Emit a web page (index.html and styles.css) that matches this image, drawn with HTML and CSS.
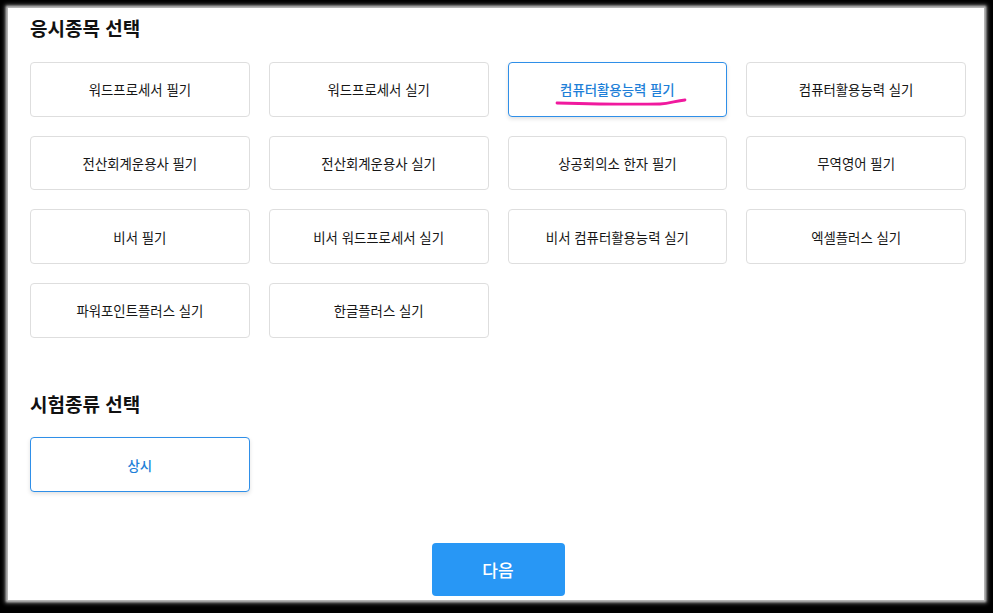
FILE: index.html
```html
<!DOCTYPE html>
<html lang="ko">
<head>
<meta charset="utf-8">
<title>응시종목 선택</title>
<link rel="stylesheet" href="styles.css">
</head>
<body>
<div class="frame">
  <main class="panel">
    <h2 class="section-title">응시종목 선택</h2>
    <div class="grid">
      <button class="opt">워드프로세서 필기</button>
      <button class="opt">워드프로세서 실기</button>
      <button class="opt selected">컴퓨터활용능력 필기
        <svg class="scribble" viewBox="0 0 140 16" width="140" height="16" aria-hidden="true"><path d="M3 11 C 40 12, 80 12.5, 106 12 C 116 11.6, 121 9, 131 8" fill="none" stroke="#f0199e" stroke-width="2.8" stroke-linecap="round"/></svg>
      </button>
      <button class="opt">컴퓨터활용능력 실기</button>
      <button class="opt">전산회계운용사 필기</button>
      <button class="opt">전산회계운용사 실기</button>
      <button class="opt">상공회의소 한자 필기</button>
      <button class="opt">무역영어 필기</button>
      <button class="opt">비서 필기</button>
      <button class="opt">비서 워드프로세서 실기</button>
      <button class="opt">비서 컴퓨터활용능력 실기</button>
      <button class="opt">엑셀플러스 실기</button>
      <button class="opt">파워포인트플러스 실기</button>
      <button class="opt">한글플러스 실기</button>
    </div>
    <h2 class="section-title second">시험종류 선택</h2>
    <div class="grid">
      <button class="opt selected">상시</button>
    </div>
    <div class="actions">
      <button class="next">다음</button>
    </div>
  </main>
</div>
</body>
</html>
```

FILE: styles.css
```css
* { box-sizing: border-box; }
html, body { margin: 0; padding: 0; }
body {
  background: #000;
  width: 993px;
  height: 613px;
  overflow: hidden;
  font-family: "Noto Sans CJK KR", "Noto Sans", sans-serif;
}
.frame {
  padding: 8px 9px 13px 8px;
  height: 613px;
}
.panel {
  background: #fff;
  height: 592px;
  padding: 8px 18px 0 22px;
  box-shadow: 0 0 2px 2px #bbb, 0 0 4px 3px #777;
  display: flex;
  flex-direction: column;
}
.section-title {
  margin: 0;
  font-size: 19px;
  line-height: 24px;
  font-weight: 700;
  color: #111;
}
.section-title.second { margin-top: 54px; }
.grid {
  margin-top: 22px;
  display: grid;
  grid-template-columns: repeat(4, 1fr);
  grid-auto-rows: 54.7px;
  gap: 19px;
}
.section-title.second + .grid { margin-top: 21px; }
.section-title.second + .grid { grid-auto-rows: 55.5px; }
.opt {
  position: relative;
  background: #fff;
  border: 1px solid #dedede;
  border-radius: 4px;
  font-family: inherit;
  font-size: 13.4px;
  color: #161616;
  padding: 0;
  cursor: pointer;
}
.opt.selected {
  border-color: #2f8fe8;
  color: #1e7fd8;
  font-weight: 500;
  box-shadow: 0 2px 4px rgba(0,0,0,0.12);
}
.scribble {
  position: absolute;
  left: 45px;
  top: 29px;
}
.actions {
  margin-top: 51px;
  display: flex;
  justify-content: center;
}
.next {
  width: 133px;
  height: 53px;
  background: #2897f5;
  color: #fff;
  border: none;
  border-radius: 4px;
  font-family: inherit;
  font-size: 17px;
  font-weight: 500;
  cursor: pointer;
}
```
